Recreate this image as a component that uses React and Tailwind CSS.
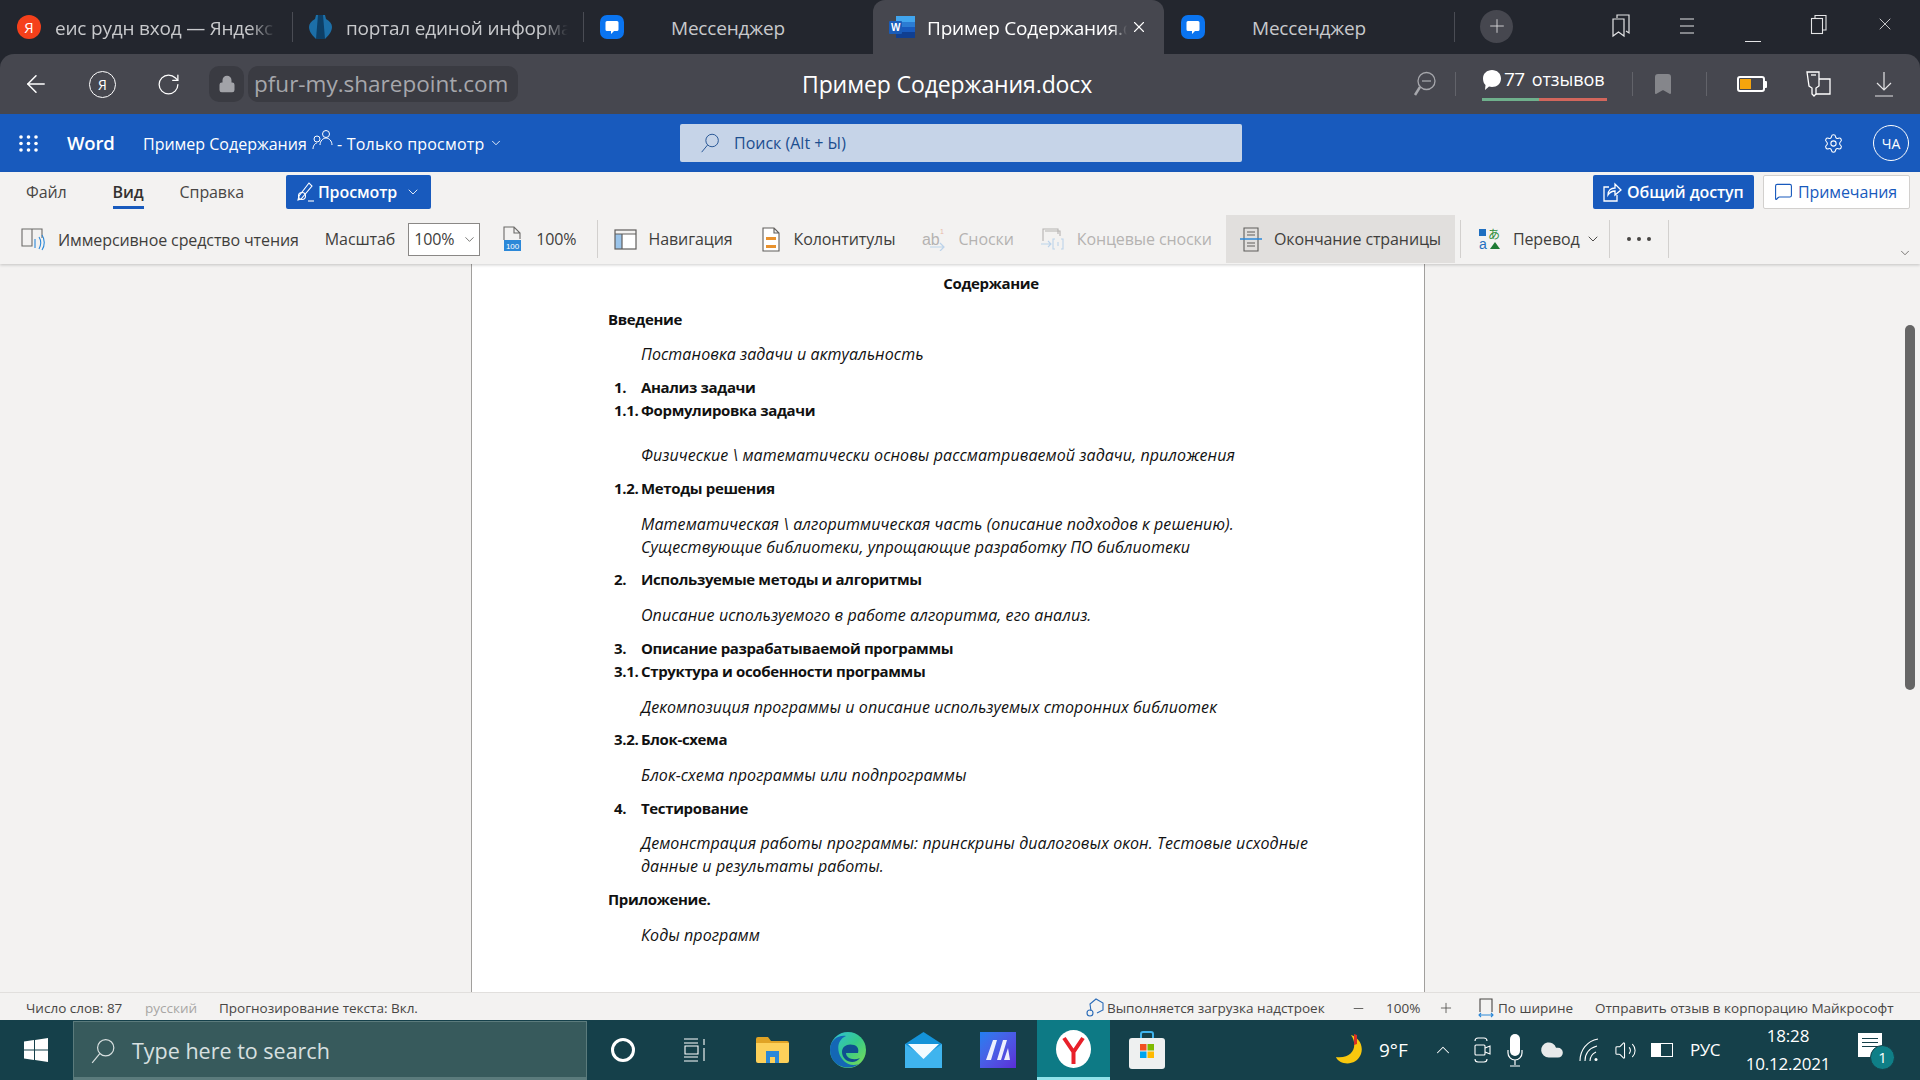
import React from 'react'
import { ArrowLeft, RotateCw, Lock, ChevronDown, ChevronUp, Plus, Minus, X, Settings, Cloud, Volume2, Bookmark, MessageSquare } from 'lucide-react'

const SANS = "font-['Open_Sans','Noto_Sans',sans-serif]"

const Sep = ({ className = '' }) => <div className={`w-px shrink-0 ${className}`} />

const MessengerIcon = () => (
  <svg width="24" height="24" viewBox="0 0 24 24" className="shrink-0">
    <rect width="24" height="24" rx="7" fill="#0a74f0" />
    <path d="M7 6h10a1.5 1.5 0 0 1 1.5 1.5v7A1.5 1.5 0 0 1 17 16h-3l-3 3v-3H7a1.5 1.5 0 0 1-1.500-1.500v-7A1.500 1.500 0 0 1 7 6z" fill="#fff" />
  </svg>
)

const WordIcon = () => (
  <svg width="26" height="24" viewBox="0 0 26 24" className="shrink-0">
    <rect x="7" y="1" width="19" height="6" fill="#41a5ee" />
    <rect x="7" y="7" width="19" height="5" fill="#2b7cd3" />
    <rect x="7" y="12" width="19" height="5" fill="#185abd" />
    <rect x="7" y="17" width="19" height="6" fill="#103f91" />
    <rect y="6" width="13" height="13" rx="1" fill="#1a5cb8" />
    <text x="6.500" y="16" textAnchor="middle" fontSize="10" fontWeight="700" fill="#fff" fontFamily="Liberation Sans">W</text>
  </svg>
)

// magnifier with the handle at bottom left, as in the reference
const LeftSearch = ({ size = 24, strokeWidth = 1.2, className = '' }) => (
  <svg width={size} height={size} viewBox="0 0 24 24" fill="none" stroke="currentColor" strokeWidth={strokeWidth} className={`shrink-0 ${className}`}>
    <circle cx="14.500" cy="9" r="7.500" />
    <path d="M9 14.500L2 23" />
  </svg>
)

function TabBar() {
  return (
    <div className={`h-[54px] bg-[#23262e] flex items-center pl-[17px] text-[19px] tracking-[-0.2px] text-[#c8c9cc] ${SANS}`}>
      <div className="w-6 h-6 rounded-full bg-[#f5401b] flex items-center justify-center text-white text-[15px] shrink-0">Я</div>
      <div className="ml-[14px] pt-[2px] w-[221px] whitespace-nowrap overflow-hidden [mask-image:linear-gradient(90deg,#000_88%,transparent)]">еис рудн вход — Яндекс</div>
      <Sep className="ml-4 h-[30px] bg-[#4a4c54]" />
      <svg width="25" height="26" viewBox="0 0 25 26" className="ml-[15px] shrink-0">
        <path d="M8 1h9l1 4c4 2 6 5 6 8 0 5-4 9-7 12H8C5 22 1 18 1 13c0-3 2-6 6-8z" fill="#1c6fa8" />
        <path d="M10 1h5l2 24H8z" fill="#0d3f66" />
      </svg>
      <div className="ml-[13px] pt-[2px] w-[222px] whitespace-nowrap overflow-hidden [mask-image:linear-gradient(90deg,#000_88%,transparent)]">портал единой информации</div>
      <Sep className="ml-[15px] h-[30px] bg-[#4a4c54]" />
      <div className="ml-4"><MessengerIcon /></div>
      <div className="ml-[47px] pt-[2px] w-[115px] whitespace-nowrap">Мессенджер</div>
      <div className="ml-[87px] w-[291px] h-[54px] bg-[#46474f] rounded-t-[12px] flex items-center pl-4 text-white">
        <WordIcon />
        <div className="ml-3 pt-[2px] w-[200px] whitespace-nowrap overflow-hidden [mask-image:linear-gradient(90deg,#000_92%,transparent)]">Пример Содержания.docx</div>
        <X size={18} strokeWidth={1.5} className="ml-[3px] text-white" />
      </div>
      <div className="ml-[17px]"><MessengerIcon /></div>
      <div className="ml-[47px] pt-[2px] w-[114px] whitespace-nowrap">Мессенджер</div>
      <Sep className="ml-[88px] h-[30px] bg-[#4a4c54]" />
      <div className="ml-[25px] w-[33px] h-[33px] rounded-full bg-[#46474f] flex items-center justify-center -translate-y-[1px]">
        <Plus size={22} strokeWidth={1} className="text-[#d8d8da]" />
      </div>
      <div className="ml-[75px] flex text-[#e4e4e6] -translate-y-[1px]">
        <div className="w-[66px] flex justify-center">
          <svg width="20" height="24" viewBox="0 0 20 24" fill="none" stroke="currentColor" strokeWidth="1.200">
            <path d="M6 4V1h12v18l-3-2" />
            <path d="M2 5h11v17l-5.500-4L2 22z" />
          </svg>
        </div>
        <div className="w-[66px] flex justify-center items-center">
          <svg width="16" height="18" viewBox="0 0 16 18" stroke="currentColor" strokeWidth="1.100"><path d="M1 2h14M1 9h14M1 16h14" /></svg>
        </div>
        <div className="w-[66px] flex justify-center items-end h-[22px]">
          <div className="w-4 h-px bg-current translate-y-[6px]" />
        </div>
        <div className="w-[66px] flex justify-center">
          <svg width="18" height="22" viewBox="0 0 18 22" fill="none" stroke="currentColor" strokeWidth="1.100">
            <rect x="1.500" y="4.500" width="11" height="15" />
            <path d="M5 4V1.500h11V16h-3" />
          </svg>
        </div>
        <div className="w-[66px] flex justify-center"><X size={20} strokeWidth={1} /></div>
      </div>
    </div>
  )
}

function AddressBar() {
  return (
    <div className="bg-[#23262e]">
      <div className={`h-[60px] bg-[#46474f] rounded-t-[14px] flex items-center pl-[22px] text-white ${SANS}`}>
        <ArrowLeft size={28} strokeWidth={1.3} />
        <div className="ml-[39px] w-[27px] h-[27px] rounded-full border border-white flex items-center justify-center text-[14px]">Я</div>
        <RotateCw size={25} strokeWidth={1.2} className="ml-[40px]" />
        <div className="ml-[28px] w-[35px] h-9 rounded-[10px] bg-[#3a3b42] flex items-center justify-center">
          <Lock size={18} fill="#a2a3a8" stroke="#a2a3a8" />
        </div>
        <div className="ml-1 w-[270px] h-9 rounded-[10px] bg-[#3a3b42] pl-[6px] text-[22.500px] text-[#a6a7ac] flex items-center whitespace-nowrap">pfur-my.sharepoint.com</div>
        <div className="ml-[284px] w-[300px] text-[23px] tracking-[-0.1px] whitespace-nowrap">Пример Содержания.docx</div>
        <div className="ml-[310px] flex items-center">
          <svg width="24" height="26" viewBox="0 0 24 26" fill="none" stroke="#a6a7ac" strokeWidth="1.300">
            <circle cx="14.500" cy="10" r="8.500" />
            <path d="M10 10h9" />
            <path d="M8 16l-5 8" strokeWidth="2.500" />
          </svg>
          <Sep className="ml-[19px] h-[24px] bg-[#62636a]" />
          <div className="ml-[26px] w-[125px] h-[34px] relative text-[19px] leading-[24px] flex items-start whitespace-nowrap">
            <svg width="20" height="22" viewBox="0 0 20 22" className="shrink-0 mt-[2px]"><path d="M10 1c5 0 9 3.500 9 8.500S15 18 10 18c-1 0-2-.2-3-.5L3 21l.5-5C1.800 14.500 1 12 1 9.500 1 4.500 5 1 10 1z" fill="#fff" /></svg>
            <span className="ml-[2px] tracking-[-0.5px]">77</span><span className="ml-[7px] text-[18px] tracking-[-0.1px]">отзывов</span>
            <div className="absolute left-0 bottom-0 flex w-[125px] h-[3px]">
              <div className="w-[57px] bg-[#6fb08c]" />
              <div className="flex-1 bg-[#d2665c]" />
            </div>
          </div>
          <Sep className="ml-[25px] h-[24px] bg-[#62636a]" />
          <Bookmark size={24} fill="#85868b" stroke="#85868b" className="ml-[18px]" />
          <Sep className="ml-[31px] h-[24px] bg-[#62636a]" />
          <div className="ml-[30px] w-[28px] h-[16px] rounded-[3px] border-2 border-white flex items-stretch p-[1px]">
            <div className="w-[11px] bg-[#f5a40c]" />
          </div>
          <div className="w-[2px] h-[7px] bg-white rounded-r-[1px] mr-[36px]" />
          <svg width="30" height="30" viewBox="0 0 30 30" fill="none" stroke="#fff" strokeWidth="1.300">
            <path d="M4 3h12v14l-3 2v6l-2 2-2-2v-6l-3-2z" />
            <path d="M8 6h5" />
            <path d="M16 10h11v15H13" />
          </svg>
          <div className="ml-[41px] flex flex-col items-center">
            <svg width="20" height="26" viewBox="0 0 20 26" fill="none" stroke="#e4e4e6" strokeWidth="1.200"><path d="M10 1v18M3 12l7 7 7-7M1 25h18" /></svg>
          </div>
        </div>
      </div>
    </div>
  )
}

function WordBar() {
  return (
    <div className={`h-[58px] bg-[#185abd] flex items-center pl-[19px] text-white ${SANS}`}>
      <svg width="19" height="17" viewBox="0 0 19 17" fill="#fff" className="shrink-0">
        {[2, 9.500, 17].map(x => [2, 8.500, 15].map(y => <circle key={`${x}-${y}`} cx={x} cy={y} r="1.800" />))}
      </svg>
      <div className="ml-[29px] w-[48px] text-[18.500px] font-semibold tracking-[-0.2px]">Word</div>
      <div className="ml-7 pt-[1px] text-[16px] w-[164px] whitespace-nowrap">Пример Содержания</div>
      <svg width="21" height="22" viewBox="0 0 21 22" fill="none" stroke="#fff" strokeWidth="1" className="ml-[5px] shrink-0 -translate-y-[3px]">
        <circle cx="14" cy="5" r="3.500" />
        <path d="M8 16c0-4 3-7 6-7s6 3 6 7" />
        <circle cx="5" cy="10" r="3" />
        <path d="M1 20c0-3 2-6 4-6" />
      </svg>
      <div className="ml-1 pt-[1px] text-[16px] tracking-[0.2px] w-[147px] whitespace-nowrap">- Только просмотр</div>
      <ChevronDown size={14} strokeWidth={1.500} className="ml-[5px]" />
      <div className="ml-[177px] w-[562px] h-[38px] rounded-[2px] bg-[#c6d4e8] flex items-center pl-5 text-[16px] text-[#1c4e8f]">
        <LeftSearch size={20} strokeWidth={1.100} />
        <span className="ml-[14px]">Поиск (Alt + Ы)</span>
      </div>
      <Settings size={21} strokeWidth={1.200} className="ml-[581px]" />
      <div className="ml-[29px] w-9 h-9 rounded-full border border-white flex items-center justify-center text-[14px]">ЧА</div>
    </div>
  )
}

const RibbonItem = ({ icon, children, className = '', dim = false }) => (
  <div className={`flex items-center whitespace-nowrap ${dim ? 'text-[#b5b3b1]' : 'text-[#3f3e3c]'} ${className}`}>
    {icon}
    <span className="ml-3">{children}</span>
  </div>
)

function Ribbon() {
  return (
    <div className={`h-[92px] bg-[#f3f2f1] text-[16px] tracking-[-0.1px] shadow-[0_1px_3px_rgba(0,0,0,0.2)] relative z-10 ${SANS}`}>
      <div className="h-[43px] flex items-center pl-[26px] pr-[10px] pb-[4px] text-[#484644]">
        <span>Файл</span>
        <div className="ml-[46px] relative font-semibold text-[#323130]">
          Вид
          <div className="absolute left-0 right-0 -bottom-[5px] h-[3px] bg-[#185abd]" />
        </div>
        <span className="ml-[36px]">Справка</span>
        <div className="ml-[42px] w-[145px] h-[34px] bg-[#185abd] rounded-[2px] flex items-center pl-[10px] text-white font-semibold">
          <svg width="20" height="22" viewBox="0 0 20 22" fill="none" stroke="#fff" strokeWidth="1.100" className="shrink-0">
            <path d="M2 19l3-1L16 5l-3-3L3 15z" />
            <circle cx="6" cy="15" r="3.500" />
            <path d="M12 20h6" />
          </svg>
          <span className="ml-[2px]">Просмотр</span>
          <ChevronDown size={16} strokeWidth={1.300} className="ml-2" />
        </div>
        <div className="ml-auto w-[161px] h-[34px] bg-[#185abd] rounded-[2px] flex items-center pl-[9px] text-white font-semibold">
          <svg width="20" height="22" viewBox="0 0 20 22" fill="none" stroke="#fff" strokeWidth="1.300" className="shrink-0">
            <path d="M7 6H2v14h13v-6" />
            <path d="M6 14c0-5 3-7 7-7V3l6 6-6 5v-4c-3 0-5 1-7 4z" />
          </svg>
          <span className="ml-[5px] whitespace-nowrap">Общий доступ</span>
        </div>
        <div className="ml-[9px] w-[147px] h-[34px] bg-white border border-[#d2d0ce] rounded-[2px] flex items-center pl-[10px] text-[#185abd]">
          <MessageSquare size={19} strokeWidth={1.400} />
          <span className="ml-[5px]">Примечания</span>
        </div>
      </div>
      <div className="h-[48px] flex items-center pl-[21px] relative">
        <RibbonItem icon={
          <svg width="25" height="26" viewBox="0 0 25 26" fill="none" stroke="#6b6a68" strokeWidth="1.100">
            <path d="M11 3H1v17h10V3zM11 3h10v9" />
            <path d="M14 13v9M18 11c2 3 2 8 0 12M21 9c3 4 3 11 0 15" stroke="#2b88d8" />
          </svg>
        }><span className="pt-[1px] inline-block">Иммерсивное средство чтения</span></RibbonItem>
        <span className="ml-[26px] text-[#3f3e3c]">Масштаб</span>
        <div className="ml-[13px] w-[72px] h-[33px] bg-white border border-[#8a8886] flex items-center pl-[5px] text-[#3f3e3c]">
          100%
          <ChevronDown size={15} strokeWidth={1.100} className="ml-auto mr-[2px]" />
        </div>
        <RibbonItem className="ml-[21px]" icon={
          <svg width="23" height="26" viewBox="0 0 23 26" fill="none" stroke="#6b6a68" strokeWidth="1.100">
            <path d="M3 14V1h10l6 6v6M13 1v6h6" />
            <rect x="3" y="14" width="17" height="11" fill="#2b88d8" stroke="none" />
            <text x="11.500" y="23" textAnchor="middle" fontSize="8" fill="#fff" stroke="none" fontFamily="Liberation Sans">100</text>
          </svg>
        }>100%</RibbonItem>
        <Sep className="ml-5 h-[38px] bg-[#d2d0ce]" />
        <RibbonItem className="ml-4" icon={
          <svg width="23" height="21" viewBox="0 0 23 21" fill="none" stroke="#605e5c" strokeWidth="1.200">
            <rect x="8" y="5" width="14" height="15" fill="#fff" stroke="none" />
            <rect x="1" y="5" width="7" height="15" fill="#9ac4ea" stroke="none" />
            <rect x="1" y="1" width="21" height="19" />
            <path d="M1 5h21M8 5v15" />
          </svg>
        }>Навигация</RibbonItem>
        <RibbonItem className="ml-[29px]" icon={
          <svg width="20" height="25" viewBox="0 0 20 25" fill="none" stroke="#605e5c" strokeWidth="1.100">
            <path d="M2 1h11l5 5v18H2zM13 1v5h5" fill="#fff" />
            <rect x="5" y="10" width="10" height="3" fill="#e8912d" stroke="none" />
            <rect x="5" y="18" width="10" height="3" fill="#e8912d" stroke="none" />
          </svg>
        }>Колонтитулы</RibbonItem>
        <RibbonItem dim className="ml-[27px]" icon={
          <svg width="24" height="24" viewBox="0 0 24 24" fill="none" stroke="#bcd3ea" strokeWidth="1.200">
            <text x="0" y="18" fontSize="16" fill="#b5b3b1" stroke="none" fontFamily="Liberation Sans">ab</text>
            <text x="18" y="7" fontSize="7" fill="#e8b8a8" stroke="none" fontFamily="Liberation Sans">1</text>
            <path d="M8 20h14M18 16l4 4-4 4" />
          </svg>
        }>Сноски</RibbonItem>
        <RibbonItem dim className="ml-[26px]" icon={
          <svg width="25" height="24" viewBox="0 0 25 24" fill="none" stroke="#b5b3b1" strokeWidth="1.100">
            <path d="M3 14V2h15v5M5 4h15v5" />
            <path d="M1 17h10M8 14l3 3-3 3" stroke="#bcd3ea" />
            <path d="M15 12h-2v10h2M21 12h2v10h-2M18 15v4" stroke="#bcd3ea" />
          </svg>
        }>Концевые сноски</RibbonItem>
        <div className="ml-[14px] w-[229px] h-[48px] bg-[#e1dfdd] pl-[14px] flex items-center">
          <RibbonItem icon={
            <svg width="22" height="25" viewBox="0 0 22 25" fill="none" stroke="#605e5c" strokeWidth="1.100">
              <path d="M4 1h14v23H4zM7 5h8M7 8h8M7 16h8M7 19h8" />
              <path d="M0 12h22" stroke="#2b88d8" strokeWidth="1.500" />
            </svg>
          }>Окончание страницы</RibbonItem>
        </div>
        <Sep className="ml-[5px] h-[38px] bg-[#d2d0ce]" />
        <RibbonItem className="ml-[17px]" icon={
          <svg width="23" height="26" viewBox="0 0 23 26">
            <rect x="1" y="3" width="7" height="7" fill="#1f6fc0" />
            <text x="1" y="23" fontSize="14" fill="#1f6fc0" fontFamily="Liberation Sans">a</text>
            <text x="10" y="13" fontSize="12" fill="#2f8f3a" fontFamily="Noto Sans CJK JP">あ</text>
            <path d="M12 23l5-7 5 7z" fill="#1e7a34" />
          </svg>
        }>Перевод</RibbonItem>
        <ChevronDown size={16} strokeWidth={1.400} className="ml-[5px] text-[#3f3e3c]" />
        <Sep className="ml-[8px] h-[38px] bg-[#d2d0ce]" />
        <div className="ml-[17px] flex gap-[6px]">
          <div className="w-[4px] h-[4px] rounded-full bg-[#484644]" />
          <div className="w-[4px] h-[4px] rounded-full bg-[#484644]" />
          <div className="w-[4px] h-[4px] rounded-full bg-[#484644]" />
        </div>
        <Sep className="ml-[17px] h-[38px] bg-[#d2d0ce]" />
        <ChevronDown size={14} strokeWidth={1.200} className="absolute right-[8px] bottom-[3px] text-[#484644]" />
      </div>
    </div>
  )
}

// doc lines: kind + top margin
const lines = [
  { t: 'Введение', k: 'head', c: 'mt-[13px]' },
  { t: 'Постановка задачи и актуальность', k: 'it', c: 'mt-[12px]' },
  { n: '1.', t: 'Анализ задачи', k: 'num', c: 'mt-[10px]' },
  { n: '1.1.', t: 'Формулировка задачи', k: 'num', c: '' },
  { t: 'Физические \\ математически основы рассматриваемой задачи, приложения', k: 'it', c: 'mt-[22px]' },
  { n: '1.2.', t: 'Методы решения', k: 'num', c: 'mt-[10px]' },
  { t: 'Математическая \\ алгоритмическая часть (описание подходов к решению).', k: 'it', c: 'mt-[13px]' },
  { t: 'Существующие библиотеки, упрощающие разработку ПО библиотеки', k: 'it', c: '' },
  { n: '2.', t: 'Используемые методы и алгоритмы', k: 'num', c: 'mt-[9px]' },
  { t: 'Описание используемого в работе алгоритма, его анализ.', k: 'it', c: 'mt-[13px]' },
  { n: '3.', t: 'Описание разрабатываемой программы', k: 'num', c: 'mt-[10px]' },
  { n: '3.1.', t: 'Структура и особенности программы', k: 'num', c: '' },
  { t: 'Декомпозиция программы и описание используемых сторонних библиотек', k: 'it', c: 'mt-[13px]' },
  { n: '3.2.', t: 'Блок-схема', k: 'num', c: 'mt-[9px]' },
  { t: 'Блок-схема программы или подпрограммы', k: 'it', c: 'mt-[13px]' },
  { n: '4.', t: 'Тестирование', k: 'num', c: 'mt-[10px]' },
  { t: 'Демонстрация работы программы: принскрины диалоговых окон. Тестовые исходные', k: 'it', c: 'mt-[12px]' },
  { t: 'данные и результаты работы.', k: 'it', c: '' },
  { t: 'Приложение.', k: 'head', c: 'mt-[10px]' },
  { t: 'Коды программ', k: 'it', c: 'mt-[13px]' },
]

function DocLine({ line }) {
  if (line.k === 'head') return <div className={`h-[23px] leading-[23px] font-bold tracking-[-0.35px] ${line.c}`}>{line.t}</div>
  if (line.k === 'it') return <div className={`h-[23px] leading-[23px] italic text-[16px] tracking-[0.08px] pl-[33px] whitespace-nowrap ${line.c}`}>{line.t}</div>
  return (
    <div className={`h-[23px] leading-[23px] font-bold tracking-[-0.35px] flex ${line.c}`}>
      <span className="w-[33px] pl-[6px] shrink-0">{line.n}</span>
      <span>{line.t}</span>
    </div>
  )
}

function DocArea() {
  return (
    <div className="flex-1 min-h-0 bg-[#f3f2f1] flex relative overflow-hidden">
      <div className="w-[471px]" />
      <div className={`w-[954px] bg-white border-x border-[#a19f9d] pl-[136px] pt-[8px] text-[15px] text-[#111] ${SANS}`}>
        <div className="h-[23px] leading-[23px] font-bold tracking-[-0.35px] w-[766px] text-center">Содержание</div>
        {lines.map((l, i) => <DocLine key={i} line={l} />)}
      </div>
      <div className="flex-1 flex justify-end pr-[5px] pt-[61px]">
        <div className="w-[10px] h-[365px] rounded-full bg-[#666]" />
      </div>
    </div>
  )
}

function StatusBar() {
  return (
    <div className={`h-[28px] bg-[#f3f2f1] border-t border-[#e1dfdd] flex items-center pl-[26px] pt-[3px] text-[13.500px] text-[#484644] whitespace-nowrap ${SANS}`}>
      <span className="w-[96px]">Число слов: 87</span>
      <span className="ml-[23px] w-[52px] text-[#a8a6a4]">русский</span>
      <span className="ml-[22px] w-[197px]">Прогнозирование текста: Вкл.</span>
      <svg width="18" height="20" viewBox="0 0 18 20" fill="none" stroke="#2b6cb8" strokeWidth="1.100" className="ml-[670px]">
        <path d="M5 13L4 6l6-5 7 4v7l-6 3" />
        <circle cx="4" cy="15" r="3" />
      </svg>
      <span className="ml-[3px] w-[218px]">Выполняется загрузка надстроек</span>
      <Minus size={15} strokeWidth={1.300} className="ml-[26px]" />
      <span className="ml-[20px] w-[35px]">100%</span>
      <Plus size={16} strokeWidth={1.200} className="ml-[17px]" />
      <svg width="16" height="20" viewBox="0 0 16 20" fill="none" stroke="#484644" strokeWidth="1.100" className="ml-[24px]">
        <path d="M2 14V1h12v13" />
        <path d="M1 17h14M3 15l-2 2 2 2M13 15l2 2-2 2" stroke="#2b88d8" />
      </svg>
      <span className="ml-1 w-[75px]">По ширине</span>
      <span className="ml-[22px]">Отправить отзыв в корпорацию Майкрософт</span>
    </div>
  )
}

function Taskbar() {
  return (
    <div className={`h-[60px] bg-[#15404a] flex items-center pl-[24px] text-white ${SANS}`}>
      <svg width="24" height="24" viewBox="0 0 24 24" fill="#fff" className="shrink-0">
        <path d="M0 3.500l10-1.400V11.500H0zM11 2l13-2v11.500H11zM0 12.500h10v9.400L0 20.500zM11 12.500h13V24l-13-2z" />
      </svg>
      <div className="ml-[25px] w-[514px] h-[59px] mt-[1px] bg-[#375a5c] border-x border-b-[3px] border-t border-[#5b7b7c] flex items-center pl-4 pt-[3px] text-[21.500px] text-[#d8e0e0]">
        <LeftSearch size={26} strokeWidth={1.100} />
        <span className="ml-4 whitespace-nowrap">Type here to search</span>
      </div>
      <div className="ml-[24px] w-[24px] h-[24px] rounded-full border-[3px] border-white shrink-0" />
      <svg width="25" height="24" viewBox="0 0 25 24" fill="none" stroke="#fff" strokeWidth="1.100" className="ml-[47px] shrink-0">
        <path d="M2 1h14M2 5h14M2 19h14M2 23h14M3 8h13v8H3zM22 1v6M22 10v13" />
      </svg>
      <svg width="33" height="26" viewBox="0 0 33 26" className="ml-[49px] shrink-0">
        <path d="M0 2a2 2 0 0 1 2-2h10l3 4h16a2 2 0 0 1 2 2v4H0z" fill="#e0a325" />
        <path d="M0 6h33v18a2 2 0 0 1-2 2H2a2 2 0 0 1-2-2z" fill="#fcd05a" />
        <path d="M10 14h13v12h-4v-6h-5v6h-4z" fill="#2b88d8" />
      </svg>
      <svg width="36" height="36" viewBox="0 0 36 36" className="ml-[41px] shrink-0">
        <defs>
          <linearGradient id="edge" x1="0" y1="0" x2="1" y2="1">
            <stop offset="0" stopColor="#2fc0dd" />
            <stop offset="0.500" stopColor="#36c98a" />
            <stop offset="1" stopColor="#7fe04f" />
          </linearGradient>
        </defs>
        <circle cx="18" cy="18" r="18" fill="url(#edge)" />
        <path d="M0 18C0 8 8 3 16 4c-7 3-9 10-7 17s10 15 20 11C18 40 0 34 0 18z" fill="#1467b5" />
        <path d="M12 20c0-6 6-9 12-7 4 1 5 5 4 8H16c0 5 7 8 14 5-6 8-18 3-18-6z" fill="#0f4f8f" />
      </svg>
      <svg width="37" height="36" viewBox="0 0 37 36" className="ml-[39px] shrink-0">
        <path d="M0 12L18.500 0 37 12v24H0z" fill="#1493d9" />
        <path d="M0 12l18.500 13L37 12v24H0z" fill="#3fb4ee" />
        <path d="M3 12h31L18.500 27z" fill="#f4fbff" />
      </svg>
      <div className="ml-[38px] w-[36px] h-[36px] bg-gradient-to-br from-[#1e7ff0] to-[#5a2bd8] flex items-center justify-center shrink-0">
        <svg width="28" height="24" viewBox="0 0 28 24" fill="#fff"><path d="M9 2h4L7 22H2zM19 2h4L17 22h-4zM24 10l2 12h-6z" opacity=".9" /></svg>
      </div>
      <div className="ml-[21px] w-[73px] h-[60px] bg-[#0d7a85] border-b-[3px] border-[#8fe3ea] flex items-center justify-center shrink-0">
        <svg width="35" height="38" viewBox="0 0 35 38">
          <ellipse cx="17.500" cy="19" rx="17.500" ry="19" fill="#fff" />
          <path d="M8 8l9.500 14M27 8l-9.500 14v12" stroke="#e8202a" strokeWidth="4" fill="none" />
        </svg>
      </div>
      <svg width="36" height="38" viewBox="0 0 36 38" className="ml-[19px] shrink-0">
        <path d="M12 8V3a2 2 0 0 1 2-2h8a2 2 0 0 1 2 2v5" fill="none" stroke="#3fb4ee" strokeWidth="2" />
        <rect y="7" width="36" height="31" rx="3" fill="#eef0f0" />
        <rect x="11" y="13" width="6.500" height="6.500" fill="#f25022" />
        <rect x="18.500" y="13" width="6.500" height="6.500" fill="#7fba00" />
        <rect x="11" y="20.500" width="6.500" height="6.500" fill="#00a4ef" />
        <rect x="18.500" y="20.500" width="6.500" height="6.500" fill="#ffb900" />
      </svg>
      <svg width="28" height="34" viewBox="0 0 28 34" className="ml-[169px] shrink-0">
        <path d="M17 2C24 12 20 26 2 24c3 8 20 10 25-3C30 12 24 4 17 2z" fill="#f9c80e" />
        <path d="M20 1l3 1v9l-3 1z" fill="#d93025" />
      </svg>
      <span className="ml-[17px] w-[34px] text-[19px] whitespace-nowrap">9°F</span>
      <ChevronUp size={22} strokeWidth={1.100} className="ml-[19px] shrink-0" />
      <svg width="20" height="28" viewBox="0 0 20 28" fill="none" stroke="#fff" strokeWidth="1.100" className="ml-[18px] shrink-0">
        <path d="M3 5a3 3 0 0 1 3-3h6a3 3 0 0 1 3 3M3 23a3 3 0 0 0 3 3h6a3 3 0 0 0 3-3" />
        <rect x="3" y="9" width="10" height="10" rx="1" />
        <path d="M13 12l5-2v8l-5-2" />
      </svg>
      <svg width="16" height="34" viewBox="0 0 16 34" fill="none" stroke="#fff" strokeWidth="1.200" className="ml-[15px] shrink-0">
        <rect x="3" y="1" width="10" height="22" rx="5" fill="#fff" stroke="none" />
        <path d="M1 17v3a7 7 0 0 0 14 0v-3M8 27v5M3 33h10" />
      </svg>
      <Cloud size={26} strokeWidth={0} fill="#e8eaea" className="ml-[16px] shrink-0" />
      <svg width="20" height="24" viewBox="0 0 20 24" fill="none" stroke="#fff" strokeWidth="1.100" className="ml-[14px] shrink-0">
        <path d="M1 23C1 12 8 3 19 1M6 23c0-8 5-13 12-15M11 23c0-4 2-7 6-9" />
        <circle cx="17" cy="21.500" r="1.500" fill="#fff" stroke="none" />
      </svg>
      <Volume2 size={23} strokeWidth={1.100} className="ml-[15px] shrink-0" />
      <div className="ml-[14px] w-[22px] h-[14px] border border-white flex shrink-0">
        <div className="w-[9px] bg-white" />
      </div>
      <span className="ml-[17px] w-[32px] text-[17px] tracking-[-0.5px]">РУС</span>
      <div className="ml-[16px] w-[100px] flex flex-col items-center text-[17px] leading-[28px] tracking-[-0.2px] whitespace-nowrap">
        <span>18:28</span>
        <span>10.12.2021</span>
      </div>
      <div className="ml-[20px] relative w-[24px] h-[24px] mb-[10px] bg-white shrink-0 flex flex-col gap-[3px] pt-[5px] px-[4px]">
        <div className="h-px bg-[#15404a]" />
        <div className="h-px bg-[#15404a]" />
        <div className="h-px bg-[#15404a]" />
        <div className="absolute left-[12px] top-[12px] w-[25px] h-[25px] rounded-full bg-[#0f7f87] border border-[#15404a] flex items-center justify-center text-[15px]">1</div>
      </div>
    </div>
  )
}

export default function App() {
  return (
    <div className="w-[1920px] h-[1080px] flex flex-col overflow-hidden bg-white">
      <TabBar />
      <AddressBar />
      <WordBar />
      <Ribbon />
      <DocArea />
      <StatusBar />
      <Taskbar />
    </div>
  )
}
